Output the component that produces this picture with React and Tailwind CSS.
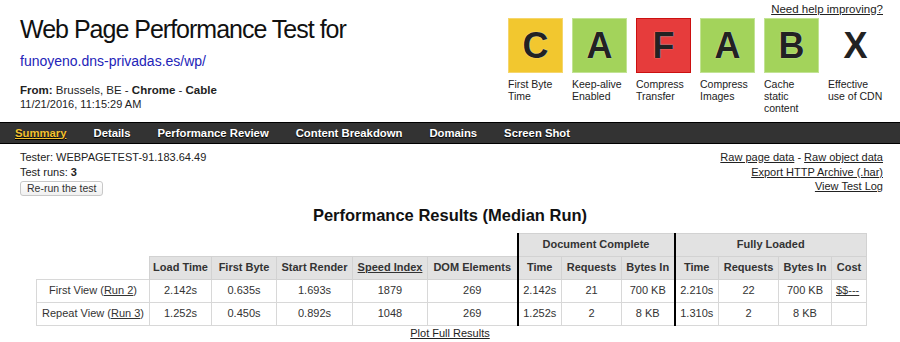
const grades = [
  { g: 'C', label: 'First Byte Time', cls: 'bg-[#f2c72f] border-[#f6d66c]' },
  { g: 'A', label: 'Keep-alive Enabled', cls: 'bg-[#a3d35b] border-[#c2e394]' },
  { g: 'F', label: 'Compress Transfer', cls: 'bg-[#e63c3c] border-[#cc1010]' },
  { g: 'A', label: 'Compress Images', cls: 'bg-[#a3d35b] border-[#c2e394]' },
  { g: 'B', label: 'Cache static content', cls: 'bg-[#a3d35b] border-[#c2e394]' },
  { g: 'X', label: 'Effective use of CDN', cls: 'bg-white border-white' },
]

const tabs = ['Summary', 'Details', 'Performance Review', 'Content Breakdown', 'Domains', 'Screen Shot']

const rows = [
  { name: 'First View', run: 'Run 2', v: ['2.142s', '0.635s', '1.693s', '1879', '269', '2.142s', '21', '700 KB', '2.210s', '22', '700 KB'], cost: '$$---' },
  { name: 'Repeat View', run: 'Run 3', v: ['1.252s', '0.450s', '0.892s', '1048', '269', '1.252s', '2', '8 KB', '1.310s', '2', '8 KB'], cost: '' },
]

const widths = ['w-[113px]', 'w-[62px]', 'w-[65px]', 'w-[76px]', 'w-[75px]', 'w-[90px]', 'w-[44px]', 'w-[60px]', 'w-[53px]', 'w-[44px]', 'w-[60px]', 'w-[53px]', 'w-[35px]']

const th = 'bg-[#e2e2e2] border border-[#d2d2d2] font-bold text-center px-0'
const td = 'border border-[#d8d8d8] text-center px-0'
const thick = 'border-l-2 border-l-black'

export default function App() {
  return (
    <div className="w-[900px] h-[342px] bg-white text-[#222] font-['Liberation_Sans',Arial,sans-serif] overflow-hidden">
      <div className="h-[122px] flex justify-between pl-[20px] pr-[17px]">
        <div className="pt-[15px]">
          <h1 className="text-[25px] leading-[28px] tracking-[-1px] text-[#111]">Web Page Performance Test for</h1>
          <a className="block mt-[10px] text-[14px] leading-[16px] text-[#2323b8]">funoyeno.dns-privadas.es/wp/</a>
          <div className="mt-[14px] text-[11.5px] leading-[14px]">
            <b>From:</b> Brussels, BE - <b>Chrome</b> - <b>Cable</b>
          </div>
          <div className="text-[11px] leading-[14px]">11/21/2016, 11:15:29 AM</div>
        </div>
        <div className="flex flex-col items-end pt-[2px]">
          <a className="text-[11.5px] leading-[14px] underline text-[#222]">Need help improving?</a>
          <div className="mt-[2px] flex gap-[9px]">
            {grades.map((it, i) => (
              <div key={i} className="w-[55px]">
                <div className={`h-[55px] border flex items-center justify-center text-[36px] font-bold text-[#222] [text-shadow:0_0_1px_#fff] ${it.cls}`}>
                  {it.g}
                </div>
                <div className="mt-[5px] text-[10.5px] leading-[12px] text-[#222]">{it.label}</div>
              </div>
            ))}
          </div>
        </div>
      </div>

      <div className="h-[22px] bg-[#333] border-y border-black flex items-center pl-[15px] gap-[27px] text-[11.3px] font-bold text-white [text-shadow:0_1px_1px_#000]">
        {tabs.map((t, i) => (
          <span key={t} className={i === 0 ? 'text-[#f3c130] underline' : ''}>{t}</span>
        ))}
      </div>

      <div className="flex justify-between pl-[20px] pr-[17px] pt-[6px] text-[11px] leading-[14.5px]">
        <div>
          <div>Tester: WEBPAGETEST-91.183.64.49</div>
          <div>Test runs: <b>3</b></div>
          <button className="mt-[1.5px] h-[15px] px-[6px] text-[10.5px] leading-[13px] border border-[#c8c8c8] rounded-[3px] bg-gradient-to-b from-white to-[#f0f0f0] text-[#333]">
            Re-run the test
          </button>
        </div>
        <div className="text-right">
          <div><a className="underline">Raw page data</a> - <a className="underline">Raw object data</a></div>
          <div><a className="underline">Export HTTP Archive (.har)</a></div>
          <div><a className="underline">View Test Log</a></div>
        </div>
      </div>

      <h2 className="mt-[9.5px] text-center text-[16.5px] leading-[20px] font-bold text-[#111]">Performance Results (Median Run)</h2>

      <table className="mt-[7.5px] ml-[36px] table-fixed border-collapse text-[11px] text-[#333]">
        <colgroup>
          {widths.map((w, i) => <col key={i} className={w} />)}
        </colgroup>
        <thead>
          <tr className="h-[23px]">
            <th colSpan={6}></th>
            <th colSpan={3} className={`${th} ${thick}`}>Document Complete</th>
            <th colSpan={4} className={`${th} ${thick}`}>Fully Loaded</th>
          </tr>
          <tr className="h-[23px]">
            <th></th>
            <th className={th}>Load Time</th>
            <th className={th}>First Byte</th>
            <th className={th}>Start Render</th>
            <th className={th}><span className="underline">Speed Index</span></th>
            <th className={th}>DOM Elements</th>
            <th className={`${th} ${thick}`}>Time</th>
            <th className={th}>Requests</th>
            <th className={th}>Bytes In</th>
            <th className={`${th} ${thick}`}>Time</th>
            <th className={th}>Requests</th>
            <th className={th}>Bytes In</th>
            <th className={th}>Cost</th>
          </tr>
        </thead>
        <tbody>
          {rows.map((r) => (
            <tr key={r.name} className="h-[23px]">
              <td className={td}>{r.name} (<a className="underline">{r.run}</a>)</td>
              {r.v.map((x, i) => (
                <td key={i} className={`${td} ${i === 5 || i === 8 ? thick : ''}`}>{x}</td>
              ))}
              <td className={`${td} text-left pl-[4px]`}>
                {r.cost && <a className="underline">{r.cost}</a>}
              </td>
            </tr>
          ))}
        </tbody>
      </table>

      <div className="text-center text-[11px] leading-[14px]">
        <a className="underline">Plot Full Results</a>
      </div>
    </div>
  )
}
